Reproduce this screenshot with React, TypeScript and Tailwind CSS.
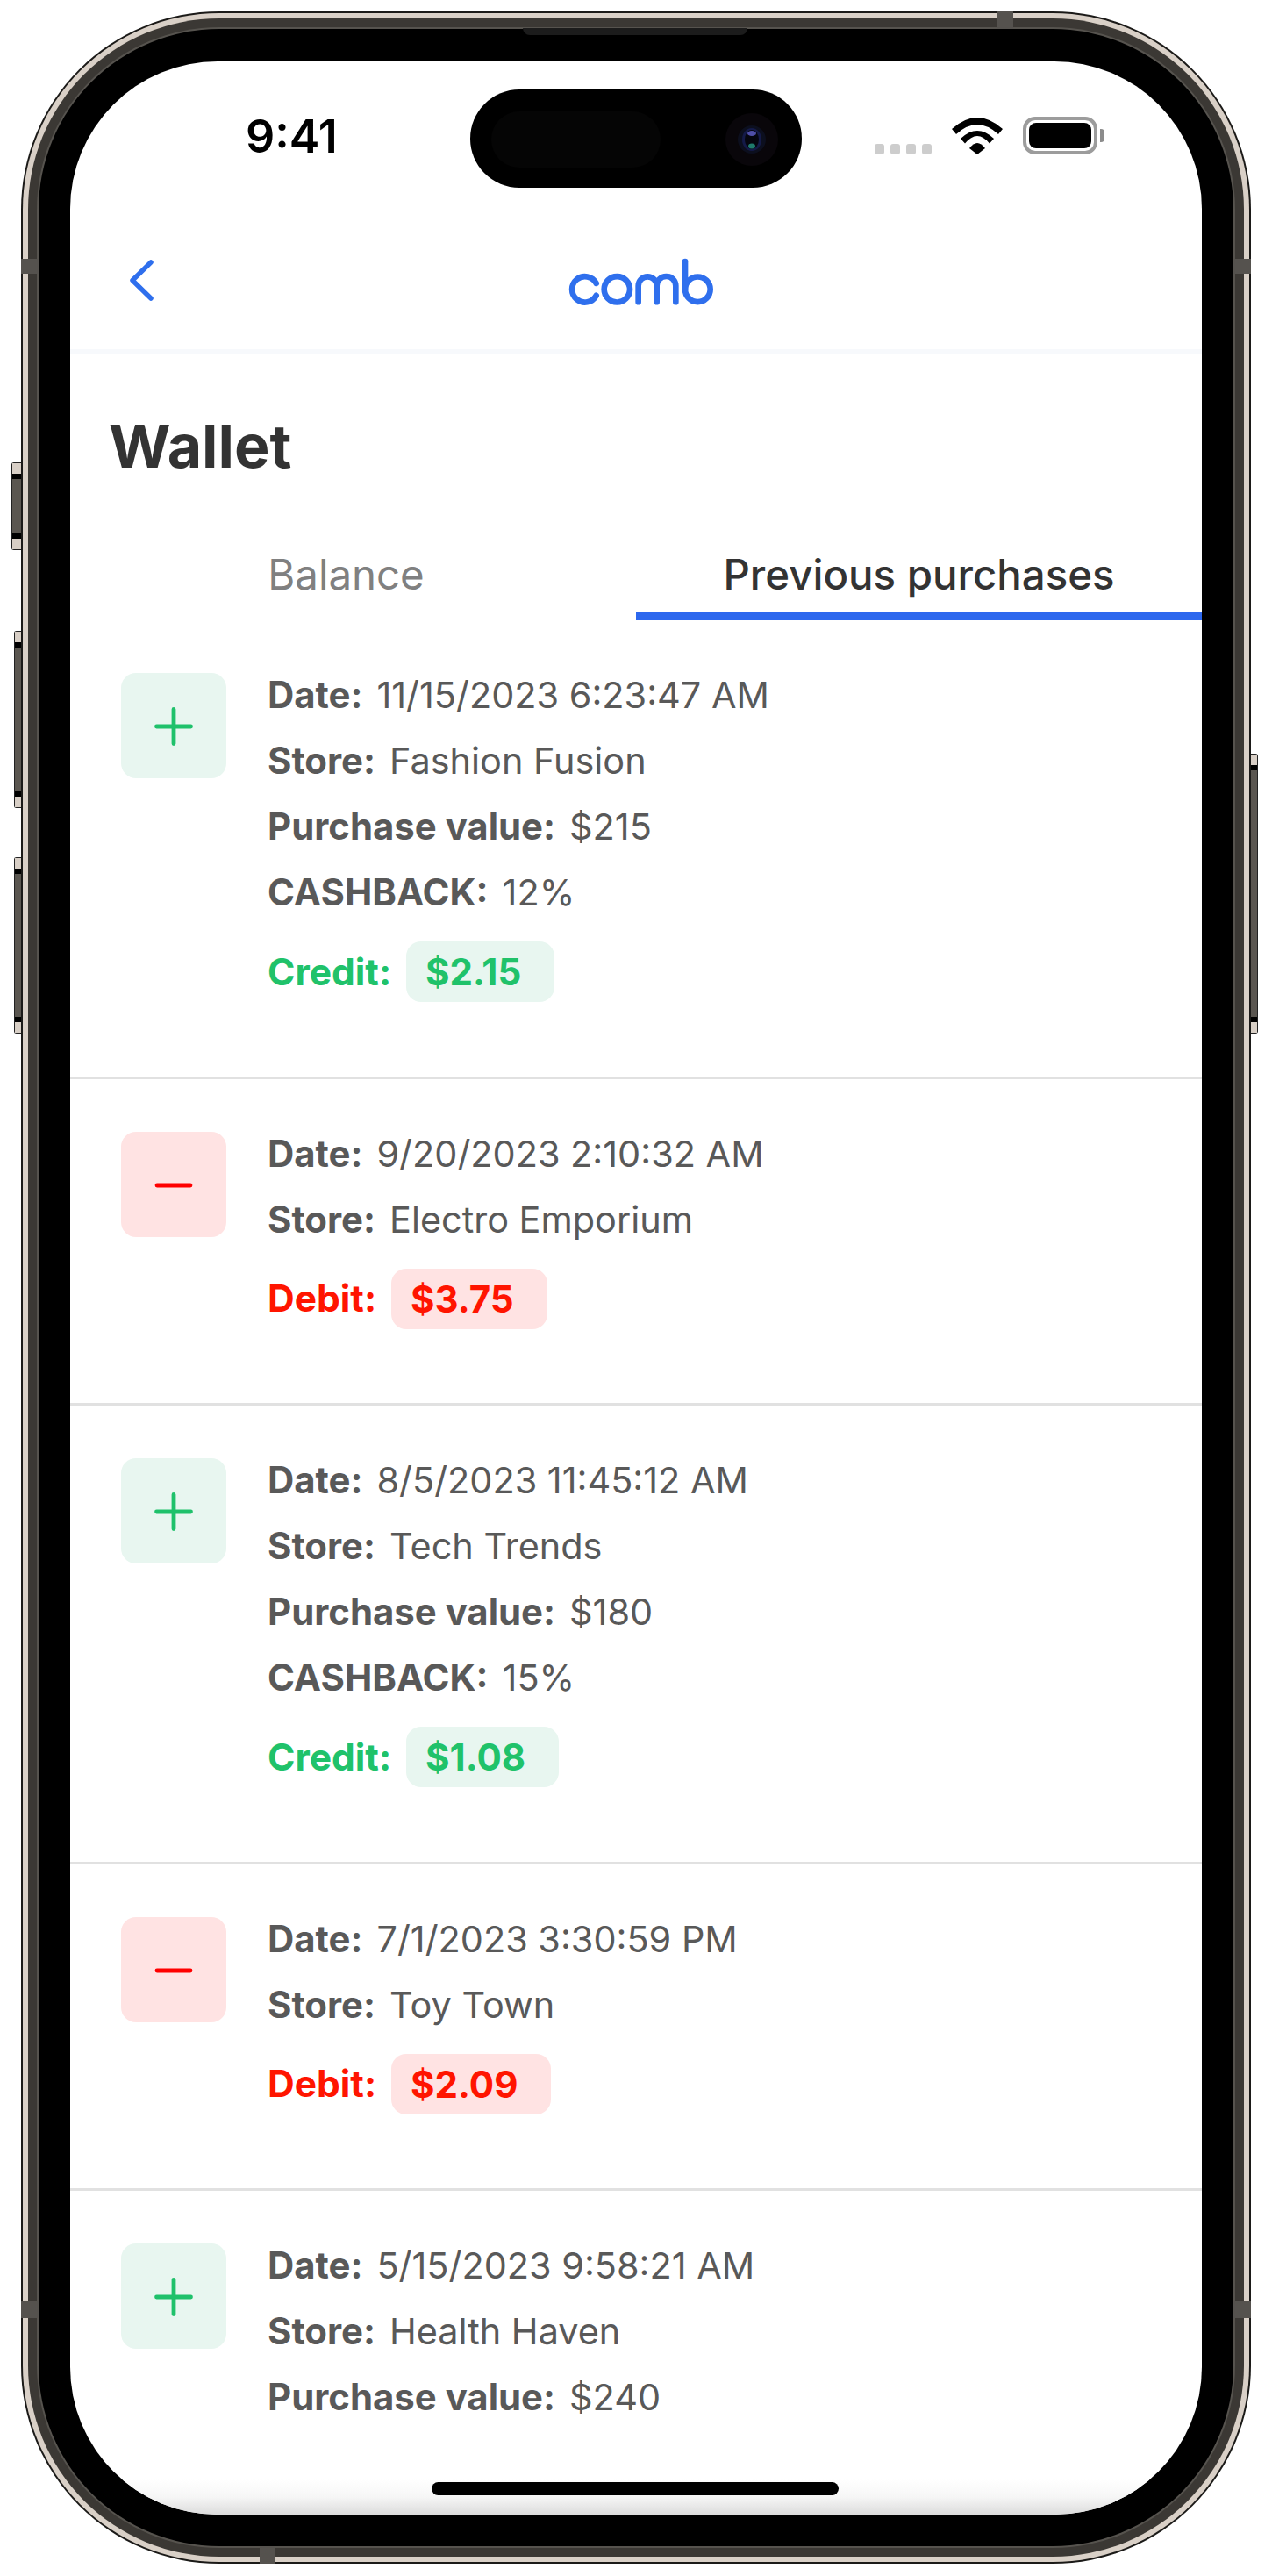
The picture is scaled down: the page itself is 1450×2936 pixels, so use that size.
import React from "react";

type Row = {
  kind: "credit" | "debit";
  date: string;
  store: string;
  value?: string;
  cashback?: string;
  amount?: string;
};

const rows: Row[] = [
  { kind: "credit", date: "11/15/2023 6:23:47 AM", store: "Fashion Fusion", value: "$215", cashback: "12%", amount: "$2.15" },
  { kind: "debit", date: "9/20/2023 2:10:32 AM", store: "Electro Emporium", amount: "$3.75" },
  { kind: "credit", date: "8/5/2023 11:45:12 AM", store: "Tech Trends", value: "$180", cashback: "15%", amount: "$1.08" },
  { kind: "debit", date: "7/1/2023 3:30:59 PM", store: "Toy Town", amount: "$2.09" },
  { kind: "credit", date: "5/15/2023 9:58:21 AM", store: "Health Haven", value: "$240" },
];

function Field({ label, value }: { label: string; value: string }) {
  return (
    <div className="flex h-[50px] items-center gap-[16px] text-[41.4px] leading-[50px] whitespace-nowrap text-[#595959]">
      <span className="text-[41.9px] font-bold">{label}</span>
      <span className="font-normal">{value}</span>
    </div>
  );
}

function SignIcon({ kind }: { kind: Row["kind"] }) {
  const credit = kind === "credit";
  return (
    <div
      className={`flex h-[120px] w-[120px] shrink-0 items-center justify-center rounded-[17px] ${
        credit ? "bg-[#e8f6f0]" : "bg-[#ffe3e3]"
      }`}
    >
      <svg width="44" height="44" viewBox="0 0 44 44" fill="none" strokeLinecap="round" strokeWidth="4.8" className="mt-[2px]">
        {credit ? (
          <path d="M2.500 22H41.500M22 2.500V41.500" stroke="#1fc16b" />
        ) : (
          <path d="M3 22H41" stroke="#ff0000" />
        )}
      </svg>
    </div>
  );
}

function PurchaseRow({ row, last }: { row: Row; last: boolean }) {
  const credit = row.kind === "credit";
  return (
    <div className={`flex gap-[47px] pl-[58px] pt-[60px] ${last ? "" : "border-b-[3px] border-[#e1e1e1] pb-[84.5px]"}`}>
      <SignIcon kind={row.kind} />
      <div className="flex flex-col gap-[25px]">
        <Field label="Date:" value={row.date} />
        <Field label="Store:" value={row.store} />
        {row.value && <Field label="Purchase value:" value={row.value} />}
        {row.cashback && <Field label="CASHBACK:" value={row.cashback} />}
        {row.amount && (
          <div
            className={`mt-[6px] flex items-center gap-[17px] text-[42.5px] font-bold ${
              credit ? "text-[#20c26a]" : "text-[#ff1500]"
            }`}
          >
            <span>{credit ? "Credit:" : "Debit:"}</span>
            <span
              className={`flex h-[69px] items-center rounded-[17px] pl-[22px] pr-[38px] text-[42px] ${
                credit ? "bg-[#e8f6f0]" : "bg-[#ffe3e3]"
              }`}
            >
              {row.amount}
            </span>
          </div>
        )}
      </div>
    </div>
  );
}

function Wifi() {
  return (
    <svg width="58" height="42" viewBox="0 0 58 42" fill="#000">
      <path d="M0 13Q29 -13 58 13L53 19Q29 -3 5 19Z" />
      <path d="M10 24Q29 6 48 24L43 29.5Q29 12.500 15 29.5Z" />
      <path d="M20 35Q29 23 38 35L29 42Z" />
    </svg>
  );
}

function Battery() {
  return (
    <div className="flex items-center">
      <div className="h-[43px] w-[85px] rounded-[14px] border-[4px] border-[#9c9c9c] p-[3px]">
        <div className="h-full w-full rounded-[8px] bg-black" />
      </div>
      <div className="ml-[3px] h-[15px] w-[5px] rounded-r-[4px] bg-[#8c8c8c]" />
    </div>
  );
}

function Logo() {
  return (
    <svg width="170" height="57" viewBox="380 640 510 170" fill="none" stroke="#2f6fed" strokeWidth="20" strokeLinecap="round" className="ml-[12px] mt-[23px]">
      <path d="M481 729A44 44 0 1 0 481 771" />
      <circle cx="552" cy="750" r="44" />
      <path d="M625 793V738A31.500 31.500 0 0 1 688 738V793M688 738A32.500 32.500 0 0 1 753 738V793" />
      <path d="M785 655V750" />
      <circle cx="828" cy="750" r="43" />
    </svg>
  );
}

function Island() {
  return (
    <div className="absolute left-[456px] top-[32px] h-[112px] w-[378px] rounded-full bg-black">
      <div className="absolute left-[24px] top-[25px] h-[64px] w-[193px] rounded-full bg-[#050505]" />
      <svg width="64" height="64" viewBox="0 0 64 64" className="absolute left-[289px] top-[25px]">
        <circle cx="32" cy="32" r="30" fill="#09060a" />
        <circle cx="32" cy="32" r="16" fill="#0c0f1e" />
        <ellipse cx="32" cy="32" rx="11" ry="13" fill="#141a48" />
        <ellipse cx="32" cy="32" rx="8" ry="11" fill="#05060f" />
        <ellipse cx="32" cy="25" rx="5" ry="3" fill="#4f4fa8" />
        <ellipse cx="32" cy="39.5" rx="4" ry="3" fill="#1f7a6c" />
      </svg>
    </div>
  );
}

function SideButton({ className, side }: { className: string; side: "left" | "right" }) {
  return (
    <div
      className={`absolute flex flex-col justify-between border-[1.5px] border-[#222] bg-[#5a5650] ${
        side === "left" ? "rounded-l-[3px] border-r-0" : "rounded-r-[3px] border-l-0"
      } ${className}`}
    >
      <div className="h-[18px] border-b-[6px] border-black bg-[#d8cfc6]" />
      <div className="h-[18px] border-t-[6px] border-black bg-[#d8cfc6]" />
    </div>
  );
}

export default function App() {
  return (
    <div className="relative h-[2936px] w-[1450px] overflow-hidden bg-white pl-[24px] pt-[13px] font-['Inter',sans-serif]">
      <SideButton side="left" className="left-[13px] top-[527px] h-[100px] w-[12px]" />
      <SideButton side="left" className="left-[16px] top-[719px] h-[202px] w-[9px]" />
      <SideButton side="left" className="left-[16px] top-[977px] h-[201px] w-[9px]" />
      <SideButton side="right" className="left-[1425px] top-[859px] h-[319px] w-[9px]" />

      <div className="relative z-10 h-[2909px] w-[1402px] rounded-[226px] bg-[#1b1a18] p-[2px]">
        <div className="h-full w-full rounded-[224px] bg-[#d9d0c7] p-[6px]">
          <div className="h-full w-full rounded-[218px] bg-[#3b3834] p-[10px]">
            <div className="h-full w-full rounded-[208px] bg-[#56534e] p-[2px]">
              <div className="h-full w-full rounded-[206px] bg-black pb-[36px] pl-[36px] pr-[36px] pt-[37px]">
                <div className="relative flex h-full w-full flex-col overflow-hidden rounded-[168px] bg-white">
                  <header className="h-[334px] shrink-0 border-b-[6px] border-[#f7f9fc]">
                    <div className="flex h-[200px] items-start justify-between pl-[200px] pr-[111px] pt-[60px]">
                      <span className="text-[52px] font-semibold leading-[52px] text-black">9:41</span>
                      <div className="mt-[3px] flex items-end">
                        <div className="mr-[23px] flex gap-[7px]">
                          <span className="h-[12px] w-[11px] rounded-[3px] bg-[#cdcdcd]" />
                          <span className="h-[12px] w-[11px] rounded-[3px] bg-[#cdcdcd]" />
                          <span className="h-[12px] w-[11px] rounded-[3px] bg-[#cdcdcd]" />
                          <span className="h-[12px] w-[11px] rounded-[3px] bg-[#cdcdcd]" />
                        </div>
                        <div className="mr-[23px]">
                          <Wifi />
                        </div>
                        <Battery />
                      </div>
                    </div>
                    <div className="grid grid-cols-[1fr_auto_1fr] items-start">
                      <div className="pl-[66px] pt-[25px]">
                        <svg width="30" height="50" viewBox="0 0 30 50" fill="none" stroke="#2f6fed" strokeWidth="5.5" strokeLinecap="round" strokeLinejoin="round">
                          <path d="M26 4L5 24.500L26 45" />
                        </svg>
                      </div>
                      <Logo />
                      <div />
                    </div>
                  </header>

                  <h1 className="ml-[44px] mt-[64px] text-[68px] font-bold leading-[80px] text-[#333]">Wallet</h1>

                  <div className="mt-[79px] grid grid-cols-2 text-[47.4px] leading-[56px]">
                    <div className="border-b-[9px] border-transparent pb-[15px] pr-[16px] text-center text-[#808080]">Balance</div>
                    <div className="border-b-[9px] border-[#2d68ee] pb-[15px] text-center font-medium text-[#333]">Previous purchases</div>
                  </div>

                  <div className="min-h-0 flex-1 overflow-hidden">
                    {rows.map((row, i) => (
                      <PurchaseRow key={i} row={row} last={i === rows.length - 1} />
                    ))}
                  </div>

                  <Island />
                  <div className="absolute bottom-0 left-0 right-0 h-[40px] bg-gradient-to-b from-white via-[#f6f6f6] to-[#dcdcdc]" />
                  <div className="absolute bottom-[22px] left-[412px] h-[15px] w-[464px] rounded-full bg-black" />
                </div>
              </div>
            </div>
          </div>
        </div>

        <div className="absolute left-[572px] top-[19px] h-[8px] w-[256px] rounded-b-[8px] bg-[#1c1c1c]" />
        <div className="absolute left-0 top-[282px] h-[17px] w-[20px] bg-[#55524e]" />
        <div className="absolute right-0 top-[282px] h-[17px] w-[20px] bg-[#55524e]" />
        <div className="absolute left-[272px] bottom-0 h-[20px] w-[17px] bg-[#55524e]" />
        <div className="absolute left-[1112px] top-0 h-[20px] w-[19px] bg-[#55524e]" />
        <div className="absolute left-0 bottom-[280px] h-[19px] w-[20px] bg-[#55524e]" />
        <div className="absolute right-0 bottom-[280px] h-[19px] w-[20px] bg-[#55524e]" />
      </div>
    </div>
  );
}
